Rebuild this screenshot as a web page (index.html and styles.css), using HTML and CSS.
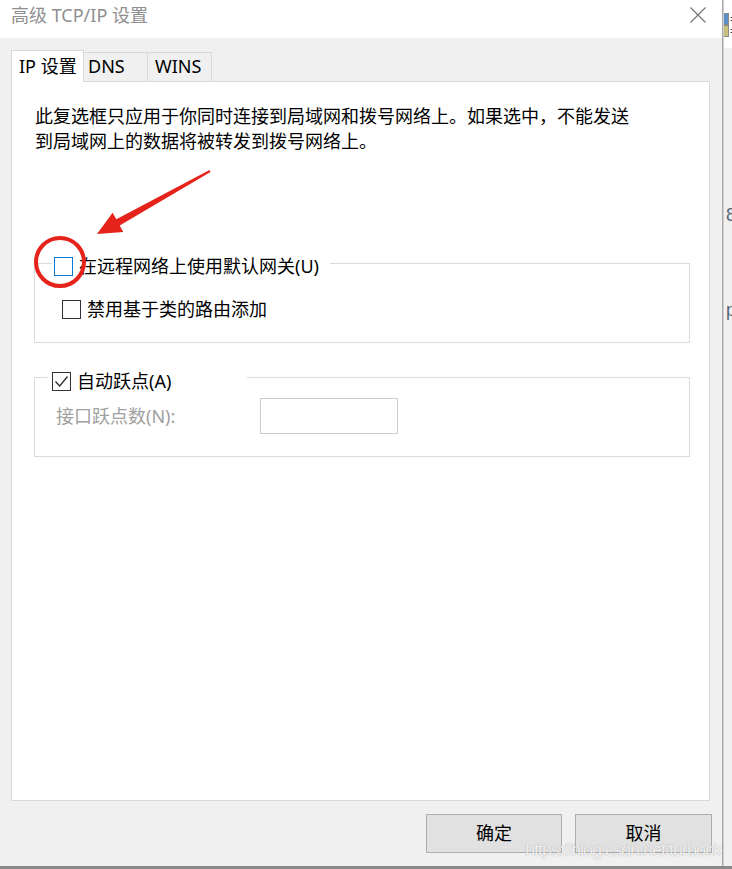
FILE: index.html
```html
<!DOCTYPE html>
<html lang="zh-CN">
<head>
<meta charset="utf-8">
<title>高级 TCP/IP 设置</title>
<link rel="stylesheet" href="styles.css">
</head>
<body>
<div class="screen">
  <div class="dialog">
    <div class="titlebar">
      <span class="title">高级 TCP/IP 设置</span>
      <svg class="close" width="16" height="16" viewBox="0 0 16 16"><path d="M0.5 0.5 L15.5 15.5 M15.5 0.5 L0.5 15.5" stroke="#707070" stroke-width="1.1" fill="none"/></svg>
    </div>
    <div class="body">
      <div class="tabs">
        <div class="tab active">IP 设置</div>
        <div class="tab tab-dns">DNS</div>
        <div class="tab tab-wins">WINS</div>
      </div>
      <div class="panel">
        <p class="desc">此复选框只应用于你同时连接到局域网和拨号网络上。如果选中，不能发送<br>到局域网上的数据将被转发到拨号网络上。</p>
        <div class="group group-gw">
          <div class="group-head head-gw">
            <span class="cb cb-focus"></span><span class="cb-label">在远程网络上使用默认网关(U)</span>
          </div>
          <div class="row row-class">
            <span class="cb"></span><span class="cb-label">禁用基于类的路由添加</span>
          </div>
        </div>
        <div class="group group-metric">
          <div class="group-head head-metric">
            <span class="cb"><svg width="17" height="17" viewBox="0 0 17 17"><path d="M2.5 8.5 L6.7 13 L14.5 3.5" stroke="#2b2b2b" stroke-width="1.3" fill="none"/></svg></span><span class="cb-label">自动跃点(A)</span>
          </div>
          <div class="row row-metric">
            <span class="field-label">接口跃点数(N):</span>
            <span class="input"></span>
          </div>
        </div>
      </div>
      <div class="buttons">
        <button class="btn">确定</button>
        <button class="btn">取消</button>
      </div>
    </div>
  </div>
  <div class="behind">
    <div class="behind-top">
      <div class="mini"><span class="ico ico-blue"></span><span class="eq">=</span></div>
      <div class="mini"><span class="ico ico-yellow"></span><span class="eq">=</span></div>
    </div>
    <div class="behind-g g8">8</div>
    <div class="behind-g gp">p</div>
  </div>
</div>
<svg class="annot" width="732" height="869" viewBox="0 0 732 869">
  <circle cx="60" cy="262" r="24" fill="none" stroke="#e5231b" stroke-width="4"/>
  <polygon points="209.5,170.1 210.5,171.9 119.7,225.4 123.3,231.9 97,234 112.6,212.7 116.3,219.3" fill="#e5231b"/>
</svg>
<div class="watermark">https://blog.csdn.net/turbock</div>
</body>
</html>
```
FILE: styles.css
```css
html, body {
  margin: 0;
  padding: 0;
}
body {
  width: 732px;
  height: 869px;
  overflow: hidden;
  position: relative;
  background: #f0f0f0;
  font-family: "Noto Sans", "Noto Sans CJK SC", sans-serif;
  font-size: 18px;
  color: #000;
}
.screen {
  display: flex;
  height: 866px;
  border-bottom: 3px solid #8a8a8a;
}
.dialog {
  width: 722px;
  flex: none;
  display: flex;
  flex-direction: column;
  border-right: 1px solid #a8a8a8;
  box-shadow: 1px 0 1px rgba(0, 0, 0, 0.12);
}
.titlebar {
  height: 38px;
  flex: none;
  background: #fff;
  display: flex;
  justify-content: space-between;
  align-items: flex-start;
  padding-left: 11px;
}
.title {
  color: #8f8f8f;
  line-height: 24px;
  margin-top: 3px;
}
.close {
  margin-top: 7px;
  margin-right: 16px;
}
.body {
  flex: 1;
  display: flex;
  flex-direction: column;
  padding: 12px 12px 0 11px;
}
.tabs {
  display: flex;
  align-items: flex-end;
  height: 31px;
}
.tab {
  box-sizing: border-box;
  height: 29px;
  line-height: 27px;
  border: 1px solid #d9d9d9;
  border-bottom: none;
  border-left: none;
  background: #f0f0f0;
  width: 64px;
  padding-left: 5px;
  white-space: nowrap;
}
.tab.active {
  height: 32px;
  line-height: 30px;
  width: 73px;
  border-left: 1px solid #d9d9d9;
  background: #fff;
  margin-bottom: -1px;
  padding-left: 7px;
  position: relative;
  z-index: 1;
}
.tab-dns {
  padding-left: 4px;
}
.tab-wins {
  padding-left: 7px;
}
.panel {
  box-sizing: border-box;
  height: 720px;
  background: #fff;
  border: 1px solid #d9d9d9;
  padding: 0 19px 0 22px;
}
.desc {
  margin: 22px 0 0 1px;
  line-height: 25px;
}
.group {
  border: 1px solid #dcdcdc;
}
.group-gw {
  margin-top: 109px;
  padding-bottom: 21px;
}
.group-metric {
  margin-top: 34px;
  padding-bottom: 22px;
}
.group-head {
  box-sizing: border-box;
  display: flex;
  align-items: center;
  height: 24px;
  background: #fff;
}
.head-gw {
  margin: -10px 0 0 17px;
  padding-left: 2px;
  width: 278px;
}
.head-metric {
  margin: -9px 0 0 13px;
  padding-left: 4px;
  width: 199px;
}
.row {
  display: flex;
  align-items: center;
}
.row-class {
  height: 24px;
  margin-top: 19px;
  padding-left: 27px;
}
.row-metric {
  margin-top: 5px;
  padding-left: 21px;
}
.cb {
  box-sizing: border-box;
  flex: none;
  width: 19px;
  height: 19px;
  border: 1px solid #333;
  background: #fff;
  display: flex;
  align-items: center;
  justify-content: center;
}
.cb-focus {
  border-color: #0a78d7;
}
.cb-label {
  margin-left: 6px;
  line-height: 24px;
  white-space: nowrap;
}
.field-label {
  width: 204px;
  color: #a0a0a0;
  line-height: 24px;
  white-space: nowrap;
}
.input {
  box-sizing: border-box;
  width: 138px;
  height: 36px;
  border: 1px solid #cccccc;
  background: #fff;
}
.buttons {
  display: flex;
  justify-content: flex-end;
  gap: 13px;
  margin-top: 13px;
  margin-right: -2px;
}
.btn {
  box-sizing: border-box;
  width: 136px;
  height: 39px;
  border: 1px solid #adadad;
  background: #e1e1e1;
  font: inherit;
  color: #000;
  padding: 0;
  line-height: 37px;
}
.btn + .btn {
  width: 137px;
}
.behind {
  flex: 1;
  display: flex;
  flex-direction: column;
  background: #f0f0f0;
  overflow: hidden;
  border-left: 1px solid #cfcfcf;
}
.behind-top {
  height: 48px;
  background: #fff;
  box-sizing: border-box;
  padding-top: 13px;
}
.mini {
  display: flex;
  align-items: center;
  height: 11px;
  margin-bottom: 1px;
}
.ico {
  width: 4px;
  height: 10px;
  border: 1px solid #8a8a8a;
  border-left: none;
  flex: none;
}
.ico-blue {
  background: #5b8fc9;
}
.ico-yellow {
  background: #c9c27a;
}
.eq {
  font-family: "Liberation Sans", sans-serif;
  font-size: 12px;
  line-height: 10px;
  color: #333;
  margin-left: 1px;
}
.behind-g {
  font-family: "Liberation Sans", sans-serif;
  font-size: 18px;
  line-height: 20px;
  color: #55657a;
  padding-left: 2px;
}
.g8 {
  margin-top: 157px;
}
.gp {
  margin-top: 75px;
}
.annot {
  position: absolute;
  left: 0;
  top: 0;
  pointer-events: none;
}
.watermark {
  position: absolute;
  left: 525px;
  top: 838px;
  font-family: "Liberation Sans", sans-serif;
  font-size: 18px;
  letter-spacing: -1px;
  line-height: 24px;
  color: rgba(255, 255, 255, 0.85);
  text-shadow: 0 0 1px rgba(0, 0, 0, 0.35);
  white-space: nowrap;
}
```
